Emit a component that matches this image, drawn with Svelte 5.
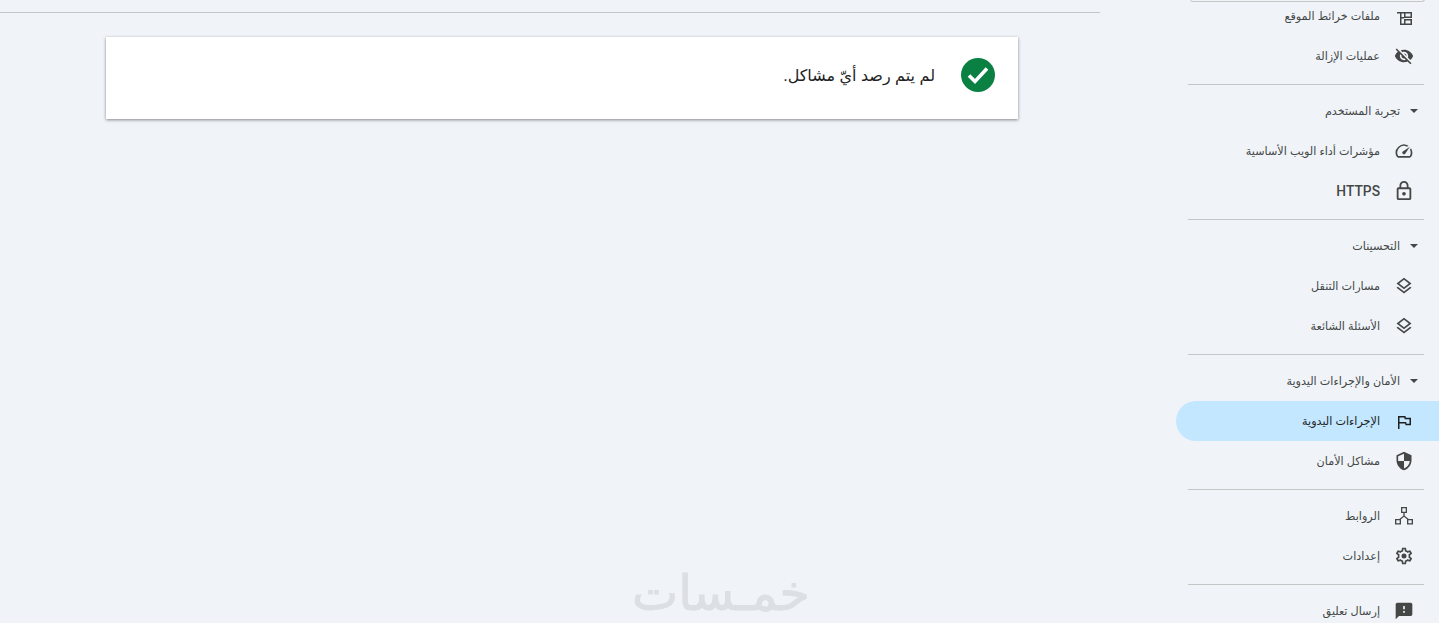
<script>
  const icons = {
    sitemap: "M3.6 7.2H12V9H9v4.2h3V15H9v6h3v1.8H7.2V9H3.6zM12 7.2h9.6v7.2H12zM13.8 9v3.6h6V9zM12 15.6h9.6v7.2H12zm1.8 1.8V21h6v-3.6z",
    removal: "M12 7c2.76 0 5 2.24 5 5 0 .65-.13 1.26-.36 1.83l2.92 2.92c1.51-1.26 2.7-2.89 3.43-4.75-1.73-4.39-6-7.5-11-7.5-1.4 0-2.74.25-3.98.7l2.16 2.16C10.74 7.13 11.35 7 12 7zM2 4.27l2.28 2.28.46.46C3.08 8.3 1.78 10.02 1 12c1.73 4.39 6 7.5 11 7.5 1.55 0 3.03-.3 4.38-.84l.42.42L19.73 22 21 20.73 3.27 3 2 4.27zM7.53 9.8l1.55 1.55c-.05.21-.08.43-.08.65 0 1.66 1.34 3 3 3 .22 0 .44-.03.65-.08l1.55 1.55c-.67.33-1.41.53-2.2.53-2.76 0-5-2.24-5-5 0-.79.2-1.53.53-2.2zm4.31-.78l3.15 3.15.02-.16c0-1.66-1.34-3-3-3l-.17.01z",
    speed: "M20.38 8.57l-1.23 1.85a8 8 0 0 1-.22 7.58H5.07A8 8 0 0 1 15.58 6.85l1.85-1.23A10 10 0 0 0 3.35 19a2 2 0 0 0 1.72 1h13.85a2 2 0 0 0 1.74-1 10 10 0 0 0-.27-10.44zm-9.79 6.84a2 2 0 0 0 2.83 0l5.66-8.49-8.49 5.66a2 2 0 0 0 0 2.83z",
    lock: "M18 8h-1V6c0-2.76-2.24-5-5-5S7 3.24 7 6v2H6c-1.1 0-2 .9-2 2v10c0 1.1.9 2 2 2h12c1.1 0 2-.9 2-2V10c0-1.1-.9-2-2-2zM9 6c0-1.66 1.34-3 3-3s3 1.34 3 3v2H9V6zm9 14H6V10h12v10zm-6-3c1.1 0 2-.9 2-2s-.9-2-2-2-2 .9-2 2 .9 2 2 2z",
    layers: "M11.99 18.54l-7.37-5.73L3 14.07l9 7 9-7-1.63-1.27zM12 16l7.36-5.73L21 9l-9-7-9 7 1.63 1.27L12 16zm0-11.47L17.74 9 12 13.47 6.26 9 12 4.53z",
    flag: "M4.8 6h9l.4 2h6.2v9h-6.6l-.4-2H6.6v6.6H4.8zM6.6 7.8v5.4h8l.4 2h3.6V9.8h-5.8l-.4-2z",
    shield: "M12 1L3 5v6c0 5.55 3.84 10.74 9 12 5.16-1.26 9-6.45 9-12V5l-9-4zm0 10.99h7c-.53 4.12-3.28 7.79-7 8.94V12H5V6.3l7-3.11v8.8z",
    links: "M8.4 1.2h7.2v7.2H8.4zM10 2.8v4h4v-4zM1.2 15.6h7.2v6.6H1.2zm1.6 1.6v3.4h4v-3.4zM15.6 15.6h7.2v6.6h-7.2zm1.6 1.6v3.4h4v-3.4zM11.2 8.4h1.6v3.2l4.8 4h-2.4L12 13l-3.2 2.6H6.4l4.8-4z",
    settings: "M19.43 12.98c.04-.32.07-.64.07-.98 0-.34-.03-.66-.07-.98l2.11-1.65c.19-.15.24-.42.12-.64l-2-3.46c-.09-.16-.26-.25-.44-.25-.06 0-.12.01-.17.03l-2.49 1c-.52-.4-1.08-.73-1.69-.98l-.38-2.65C14.46 2.18 14.25 2 14 2h-4c-.25 0-.46.18-.49.42l-.38 2.65c-.61.25-1.17.59-1.69.98l-2.49-1c-.06-.02-.12-.03-.18-.03-.17 0-.34.09-.43.25l-2 3.46c-.13.22-.07.49.12.64l2.11 1.65c-.04.32-.07.65-.07.98 0 .33.03.66.07.98l-2.11 1.65c-.19.15-.24.42-.12.64l2 3.46c.09.16.26.25.44.25.06 0 .12-.01.17-.03l2.49-1c.52.4 1.08.73 1.69.98l.38 2.65c.03.24.24.42.49.42h4c.25 0 .46-.18.49-.42l.38-2.65c.61-.25 1.17-.59 1.69-.98l2.49 1c.06.02.12.03.18.03.17 0 .34-.09.43-.25l2-3.46c.12-.22.07-.49-.12-.64l-2.11-1.65zm-1.98-1.71c.04.31.05.52.05.73 0 .21-.02.43-.05.73l-.14 1.13.89.7 1.08.84-.7 1.21-1.27-.51-1.04-.42-.9.68c-.43.32-.84.56-1.25.73l-1.06.43-.16 1.13-.2 1.35h-1.4l-.19-1.35-.16-1.13-1.06-.43c-.43-.18-.83-.41-1.23-.71l-.91-.7-1.06.43-1.27.51-.7-1.21 1.08-.84.89-.7-.14-1.13c-.03-.31-.05-.54-.05-.74s.02-.43.05-.73l.14-1.13-.89-.7-1.08-.84.7-1.21 1.27.51 1.04.42.9-.68c.43-.32.84-.56 1.25-.73l1.06-.43.16-1.13.2-1.35h1.39l.19 1.35.16 1.13 1.06.43c.43.18.83.41 1.23.71l.91.7 1.06-.43 1.27-.51.7 1.21-1.07.85-.89.7.14 1.13zM12 9a3 3 0 1 0 0 6 3 3 0 0 0 0-6z",
    feedback: "M20 2H4c-1.1 0-1.99.9-1.99 2L2 22l4-4h14c1.1 0 2-.9 2-2V4c0-1.1-.9-2-2-2zm-7 12h-2v-2h2v2zm0-4h-2V6h2v4z"
  };

  const sections = [
    { items: [
      { label: "ملفات خرائط الموقع", icon: "sitemap" },
      { label: "عمليات الإزالة", icon: "removal" }
    ] },
    { title: "تجربة المستخدم", items: [
      { label: "مؤشرات أداء الويب الأساسية", icon: "speed" },
      { label: "HTTPS", icon: "lock", latin: true, box: "1 1 22 22" }
    ] },
    { title: "التحسينات", items: [
      { label: "مسارات التنقل", icon: "layers" },
      { label: "الأسئلة الشائعة", icon: "layers" }
    ] },
    { title: "الأمان والإجراءات اليدوية", items: [
      { label: "الإجراءات اليدوية", icon: "flag", active: true },
      { label: "مشاكل الأمان", icon: "shield" }
    ] },
    { items: [
      { label: "الروابط", icon: "links" },
      { label: "إعدادات", icon: "settings" }
    ] },
    { items: [
      { label: "إرسال تعليق", icon: "feedback" }
    ] }
  ];
</script>

<div class="page">
  <main class="content">
    <div class="rule"></div>
    <div class="card">
      <svg class="check" viewBox="0 0 34 34" width="34" height="34">
        <circle cx="17" cy="17" r="17" fill="#0b8043" />
        <path d="M8 17.5l6 6 12-13" fill="none" stroke="#fff" stroke-width="3.6" />
      </svg>
      <p>لم يتم رصد أيّ مشاكل.</p>
    </div>
    <div class="watermark">خمـسات</div>
  </main>

  <nav class="sidebar">
    <div class="search-edge"></div>
    {#each sections as section, i}
      {#if i > 0}<div class="divider"></div>{/if}
      <div class="section" class:first={i === 0}>
        {#if section.title}
          <div class="heading">
            <span class="caret"></span>
            <span>{section.title}</span>
          </div>
        {/if}
        {#each section.items as item}
          <div class="item" class:active={item.active}>
            <svg viewBox={item.box || "0 0 24 24"} width="20" height="20"><path d={icons[item.icon]} fill-rule="evenodd" /></svg>
            <span class:latin={item.latin}>{item.label}</span>
          </div>
        {/each}
      </div>
    {/each}
  </nav>
</div>

<style>
  :global(body) {
    margin: 0;
    background: #f0f4f9;
    overflow: hidden;
  }

  .page {
    display: flex;
    height: 623px;
    overflow: hidden;
    font-family: "Liberation Sans", "DejaVu Sans", sans-serif;
    color: #444746;
  }

  .content {
    position: relative;
    width: 1100px;
    flex: none;
    padding-top: 12px;
  }

  .rule {
    height: 1px;
    background: #c4c7c5;
  }

  .card {
    direction: rtl;
    display: flex;
    align-items: center;
    box-sizing: border-box;
    width: 912px;
    height: 82px;
    margin: 24px 0 0 106px;
    padding: 0 23px 6px 0;
    background: #fff;
    box-shadow: 0 1px 3px rgba(60, 64, 67, 0.6);
  }

  .card p {
    margin: 0 26px 0 0;
    font-size: 16px;
    color: #1f1f1f;
  }

  .check {
    flex: none;
  }

  .watermark {
    position: absolute;
    left: 632px;
    bottom: 0;
    font-size: 49px;
    line-height: 60px;
    font-weight: 400;
    color: #dcdfe4;
    -webkit-text-stroke: 1px #dcdfe4;
  }

  .sidebar {
    direction: rtl;
    width: 263px;
    margin-left: 76px;
    flex: none;
  }

  .search-edge {
    height: 3px;
    margin: -1px 14px 0 14px;
    border: 1px solid #c4c7c5;
    border-top: none;
    border-radius: 0 0 10px 10px;
    box-sizing: border-box;
  }

  .section {
    padding: 6px 0 8px;
  }

  .section.first {
    padding-top: 0;
    margin-top: -6px;
  }

  .divider {
    height: 1px;
    margin: 0 15px 0 12px;
    background: #c4c7c5;
  }

  .heading {
    display: flex;
    align-items: center;
    height: 40px;
    padding-right: 21px;
    gap: 10px;
    font-size: 11.2px;
  }

  .caret {
    width: 0;
    height: 0;
    border-left: 4px solid transparent;
    border-right: 4px solid transparent;
    border-top: 4px solid #444746;
  }

  .item {
    display: flex;
    align-items: center;
    height: 40px;
    padding-right: 25px;
    gap: 14px;
    font-size: 11.2px;
    border-radius: 20px 0 0 20px;
  }

  .item svg {
    flex: none;
    fill: #444746;
  }

  .item.active {
    background: #c2e7ff;
    color: #1f1f1f;
  }

  .item.active svg {
    fill: #1f1f1f;
  }

  .latin {
    font-family: Roboto, sans-serif;
    font-size: 13.8px;
    font-weight: 500;
  }
</style>
